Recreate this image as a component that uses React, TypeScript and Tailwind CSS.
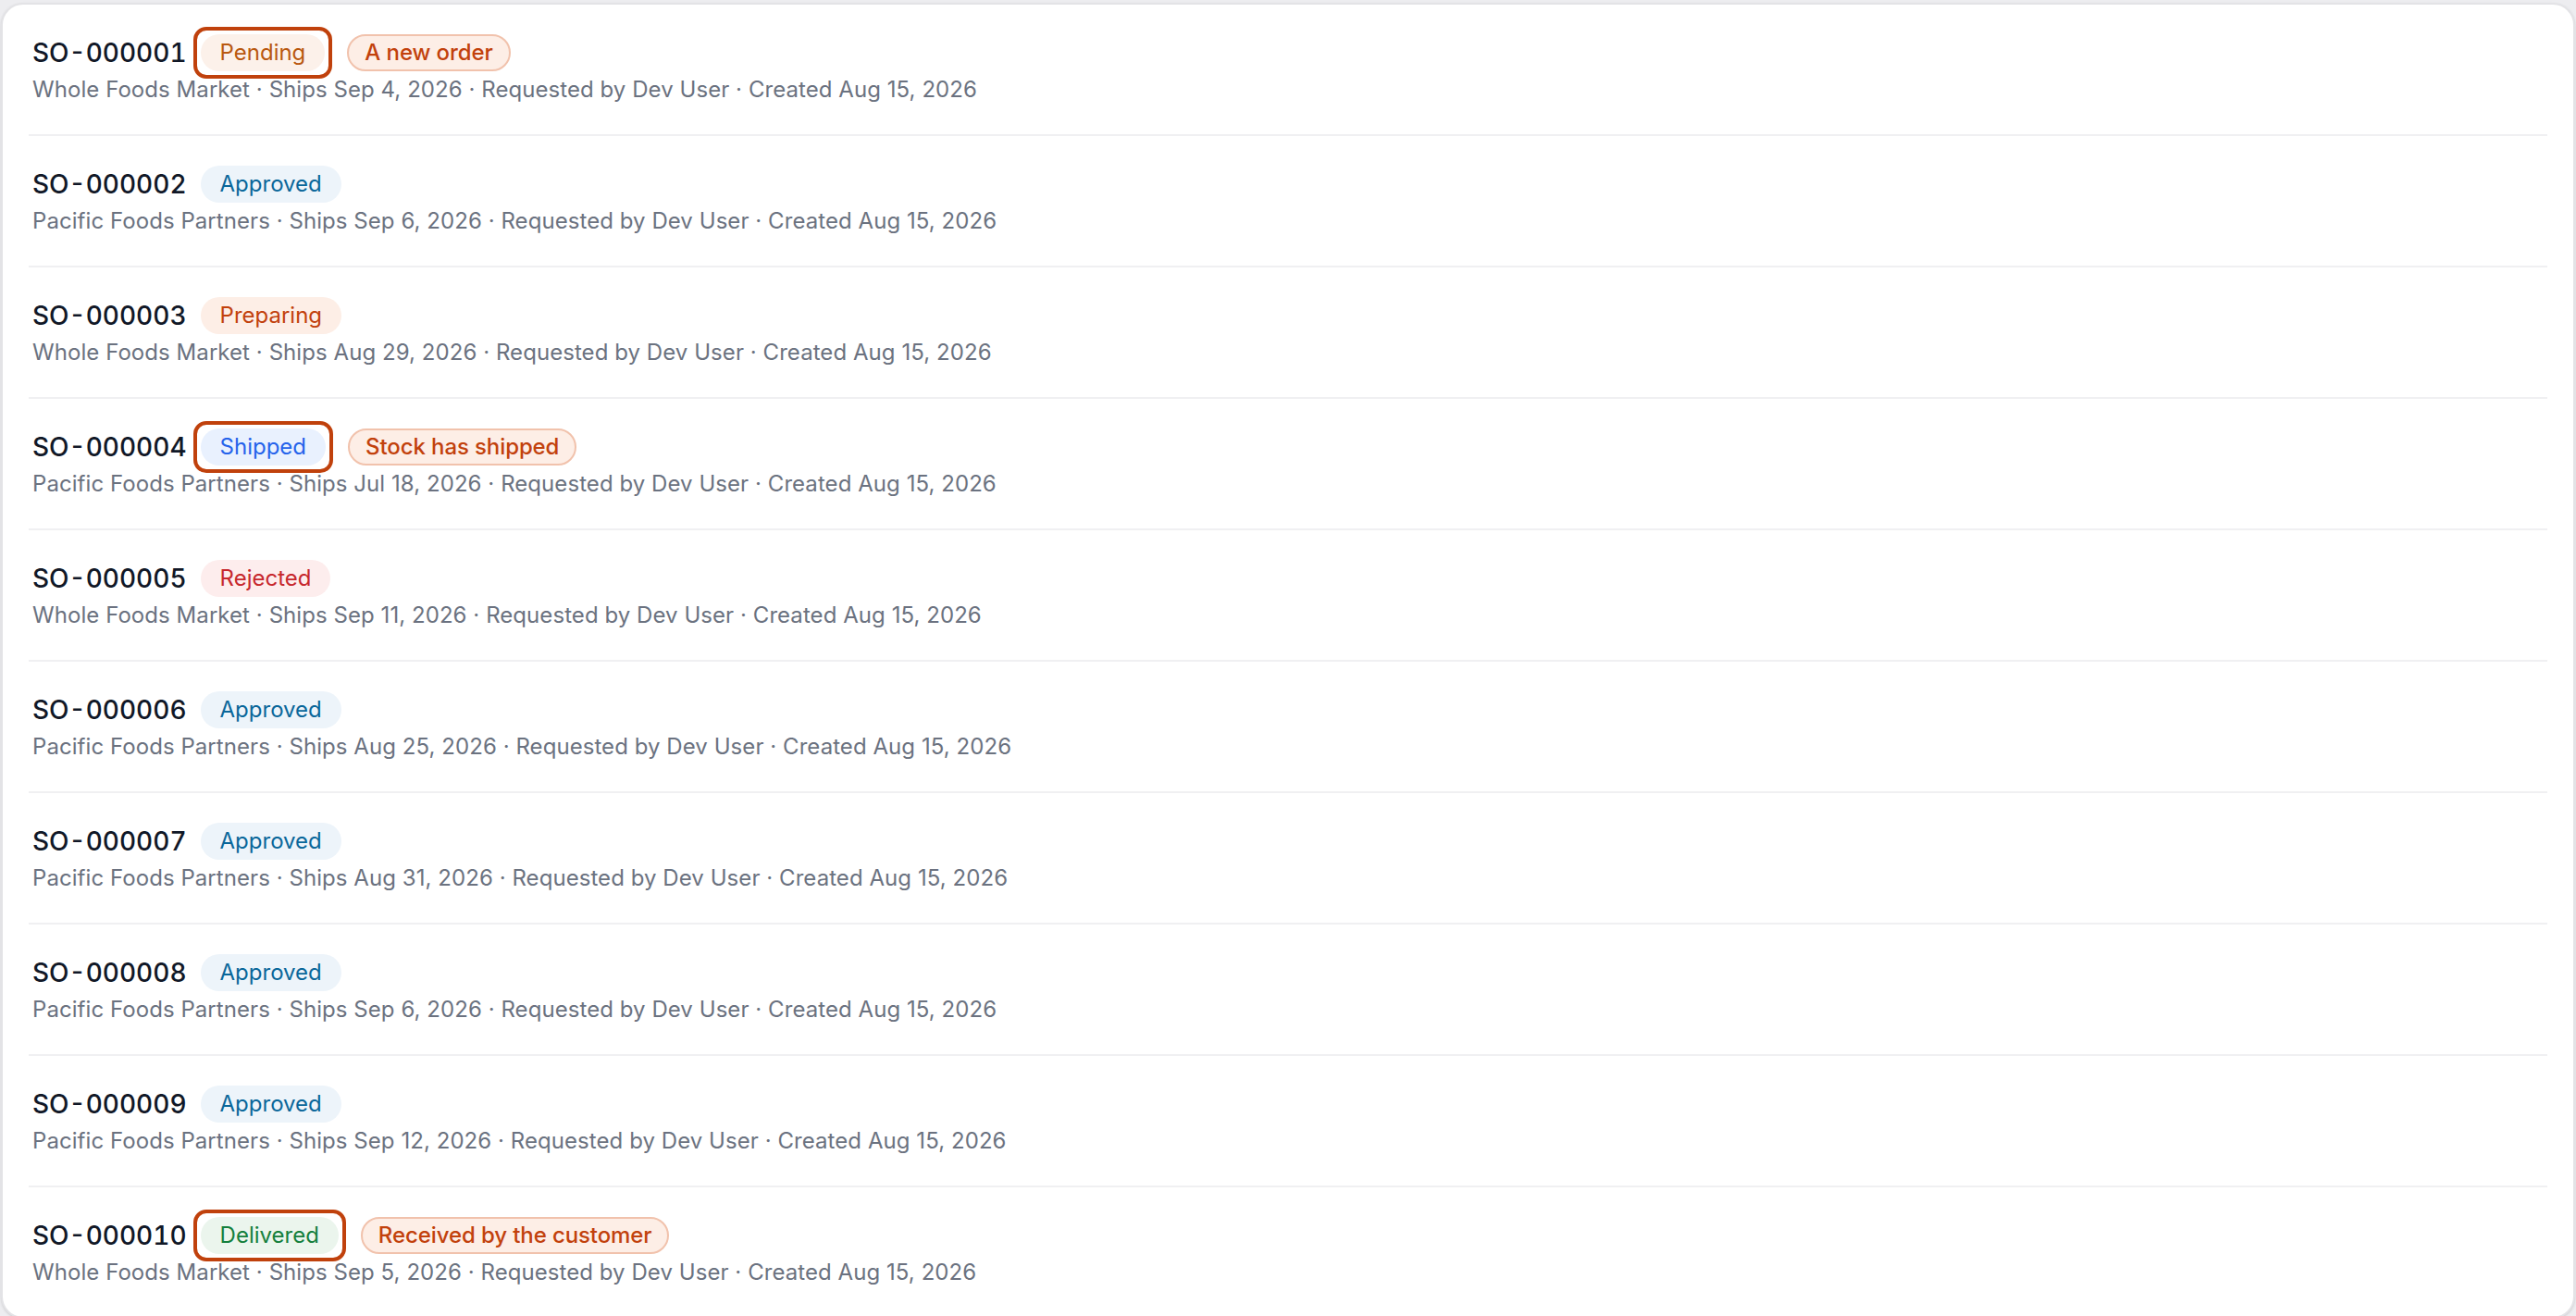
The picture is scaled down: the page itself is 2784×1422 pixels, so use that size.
import React from 'react'

type Status = 'Pending' | 'Approved' | 'Preparing' | 'Shipped' | 'Rejected' | 'Delivered'

interface Order {
  id: string
  status: Status
  customer: string
  ships: string
  note?: string
  highlight?: boolean
}

const orders: Order[] = [
  { id: 'SO-000001', status: 'Pending', customer: 'Whole Foods Market', ships: 'Sep 4, 2026', note: 'A new order', highlight: true },
  { id: 'SO-000002', status: 'Approved', customer: 'Pacific Foods Partners', ships: 'Sep 6, 2026' },
  { id: 'SO-000003', status: 'Preparing', customer: 'Whole Foods Market', ships: 'Aug 29, 2026' },
  { id: 'SO-000004', status: 'Shipped', customer: 'Pacific Foods Partners', ships: 'Jul 18, 2026', note: 'Stock has shipped', highlight: true },
  { id: 'SO-000005', status: 'Rejected', customer: 'Whole Foods Market', ships: 'Sep 11, 2026' },
  { id: 'SO-000006', status: 'Approved', customer: 'Pacific Foods Partners', ships: 'Aug 25, 2026' },
  { id: 'SO-000007', status: 'Approved', customer: 'Pacific Foods Partners', ships: 'Aug 31, 2026' },
  { id: 'SO-000008', status: 'Approved', customer: 'Pacific Foods Partners', ships: 'Sep 6, 2026' },
  { id: 'SO-000009', status: 'Approved', customer: 'Pacific Foods Partners', ships: 'Sep 12, 2026' },
  { id: 'SO-000010', status: 'Delivered', customer: 'Whole Foods Market', ships: 'Sep 5, 2026', note: 'Received by the customer', highlight: true },
]

const statusStyles: Record<Status, string> = {
  Pending: 'bg-[#fcf1ea] text-[#b9580f]',
  Approved: 'bg-[#edf4fa] text-[#0a679a]',
  Preparing: 'bg-[#fdeee6] text-[#c2410c]',
  Shipped: 'bg-[#e9f1fe] text-[#2563eb]',
  Rejected: 'bg-[#fdeded] text-[#c7282d]',
  Delivered: 'bg-[#ebf5ed] text-[#15803d]',
}

function StatusBadge({ status, highlight }: { status: Status; highlight?: boolean }) {
  return (
    <span className="relative inline-flex">
      <span className={`inline-flex h-[40px] items-center rounded-full px-[21px] text-[24px] leading-none ${statusStyles[status]}`}>
        {status}
      </span>
      {highlight && (
        <span className="pointer-events-none absolute -inset-[8px] rounded-[14px] border-[4px] border-[#c0410c]" />
      )}
    </span>
  )
}

function NoteBadge({ text }: { text: string }) {
  return (
    <span className="inline-flex h-[40px] items-center rounded-full border-2 border-[#f1c2ac] bg-[#fdeee6] px-[17px] text-[24px] font-medium leading-none tracking-[-0.1px] text-[#c2410c]">
      {text}
    </span>
  )
}

function OrderRow({ order }: { order: Order }) {
  return (
    <div className="px-[4px] py-[32px]">
      <div className="flex h-[40px] items-center">
        <span className="text-[28px] leading-[40px] font-medium text-[#111827] tabular-nums">{order.id}</span>
        <span className="ml-[15px]">
          <StatusBadge status={order.status} highlight={order.highlight} />
        </span>
        {order.note && (
          <span className="ml-[24px]">
            <NoteBadge text={order.note} />
          </span>
        )}
      </div>
      <div className="mt-[4px] text-[24px] leading-[32px] tracking-[0.06px] text-[#6b7280]">
        {order.customer} · Ships {order.ships} · Requested by Dev User · Created Aug 15, 2026
      </div>
    </div>
  )
}

export default function App() {
  return (
    <div className="min-h-screen bg-[#ededf0] px-[1px] pt-[3px] pb-[1px]" style={{ fontFamily: 'Inter, "Noto Sans", sans-serif' }}>
      <div className="rounded-[24px] border-2 border-[#e3e3e6] bg-white px-[28px] shadow-sm">
        <div className="divide-y-2 divide-[#f0f0f2]">
          {orders.map((order) => (
            <OrderRow key={order.id} order={order} />
          ))}
        </div>
      </div>
    </div>
  )
}
